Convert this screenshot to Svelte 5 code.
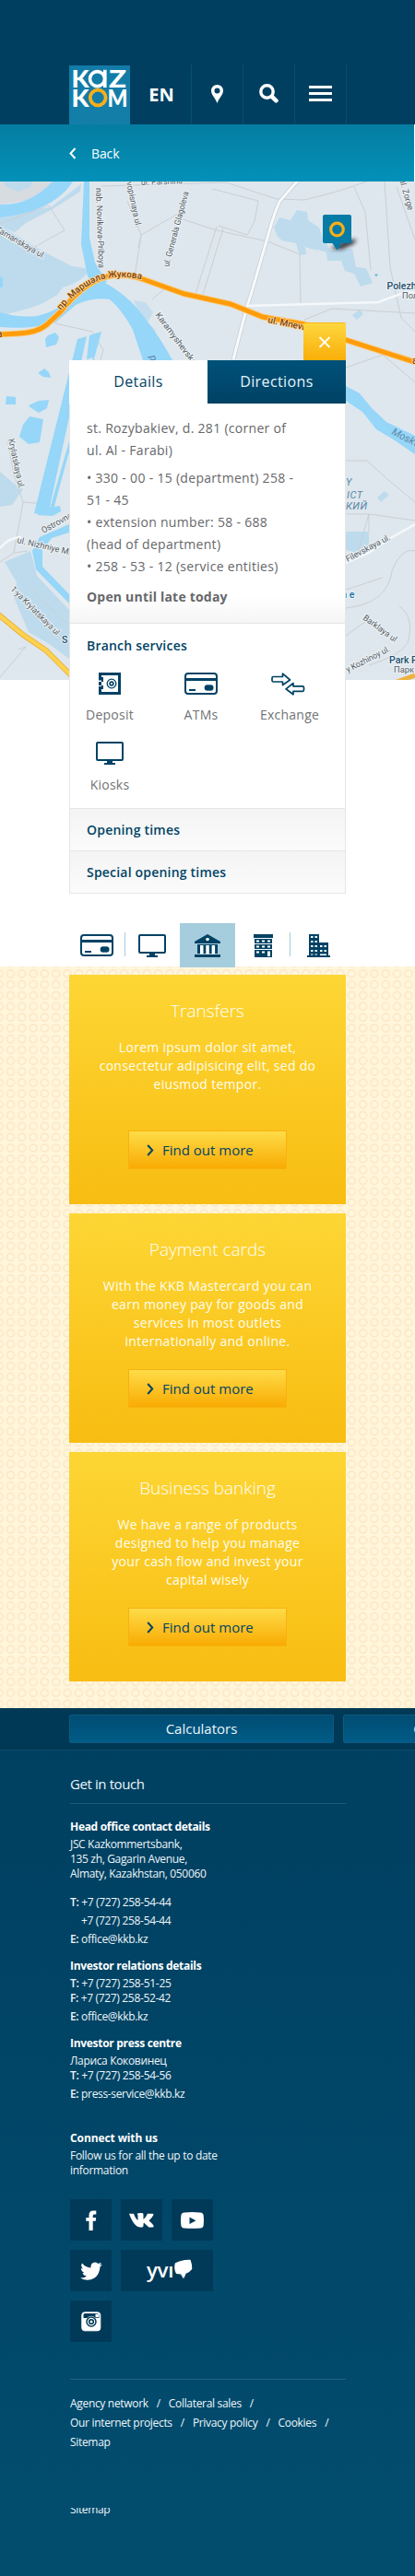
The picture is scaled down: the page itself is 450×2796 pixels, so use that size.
<script>
  const address = ['st. Rozybakiev, d. 281 (corner of', 'ul. Al - Farabi)'];
  const phones = [
    '• 330 - 00 - 15 (department) 258 -',
    '51 - 45',
    '• extension number: 58 - 688',
    '(head of department)',
    '• 258 - 53 - 12 (service entities)'
  ];
  const promos = [
    { title: 'Transfers', lines: ['Lorem ipsum dolor sit amet,', 'consectetur adipisicing elit, sed do', 'eiusmod tempor.'] },
    { title: 'Payment cards', lines: ['With the KKB Mastercard you can', 'earn money pay for goods and', 'services in most outlets', 'internationally and online.'] },
    { title: 'Business banking', lines: ['We have a range of products', 'designed to help you manage', 'your cash flow and invest your', 'capital wisely'] }
  ];
  const labels = [
    { t: 'nab. Novikova-Priboya', x: 104, y: 204, a: 88, l: 87 },
    { t: 'vopisnaya ul.', x: 137, y: 198, a: 78, l: 50 },
    { t: 'ul. Parshina', x: 153, y: 201, a: -2, l: 45 },
    { t: 'ul. Generala Glagoleva', x: 183, y: 290, a: -75, l: 84 },
    { t: 'Tamanskaya ul.', x: -5, y: 251, a: 30, l: 60 },
    { t: 'ul. Zorge', x: 433, y: 195, a: 74, l: 35 },
    { t: 'Karamyshevskaya', x: 168, y: 342, a: 53, l: 78 },
    { t: 'Krylatskaya ul.', x: 9, y: 477, a: 78, l: 55 },
    { t: 'Ostrovnaya', x: 47, y: 579, a: -29, l: 46 },
    { t: 'ul. Nizhniye Mnevniki', x: 18, y: 589, a: 13, l: 86 },
    { t: '1-ya Krylatskaya ul.', x: 11, y: 640, a: 45, l: 73 },
    { t: 'Filevskaya ul.', x: 377, y: 610, a: -28, l: 53 },
    { t: 'Barklaya ul', x: 393, y: 672, a: 36, l: 43 },
    { t: 'y Kozhinoy ul.', x: 377, y: 730, a: -27, l: 52 }
  ];
</script>

{#snippet cardIcon()}
  <svg width="36" height="24" viewBox="0 0 36 24">
    <rect x="1" y="1" width="34" height="22" rx="3" fill="#fff" stroke="#004264" stroke-width="2" />
    <path d="M1 6h34v3H1zM5 18h7v2H5z" fill="#004264" />
    <circle cx="25" cy="16.5" r="3.3" fill="#004264" /><circle cx="28.2" cy="16.5" r="3.3" fill="#004264" />
  </svg>
{/snippet}

{#snippet monitorIcon()}
  <svg width="30" height="25" viewBox="0 0 30 25">
    <rect x="1" y="1" width="28" height="19" rx="1" fill="#fff" stroke="#004264" stroke-width="2" />
    <path d="M12 20h6v3h3v2H9v-2h3z" fill="#004264" />
  </svg>
{/snippet}

<div class="page">
  <header>
    <div class="logo">
      <svg width="66" height="64" viewBox="0 0 66 64">
        <g font-family="Lato" font-weight="900" font-size="27" fill="#fff">
          <text x="2.5" y="24" textLength="19" lengthAdjust="spacingAndGlyphs">K</text>
          <text x="43" y="24" textLength="19" lengthAdjust="spacingAndGlyphs">Z</text>
          <text x="2.5" y="44.6" textLength="19" lengthAdjust="spacingAndGlyphs">K</text>
          <text x="41.5" y="44.6" textLength="22" lengthAdjust="spacingAndGlyphs">M</text>
        </g>
        <circle cx="30.5" cy="14.6" r="8" fill="none" stroke="#fff" stroke-width="3.6" />
        <rect x="37" y="4.8" width="3.6" height="19.2" fill="#fff" />
        <circle cx="31.2" cy="35" r="8.4" fill="none" stroke="#fcae17" stroke-width="3.8" />
      </svg>
    </div>
    <nav>
      <span class="lang">EN</span>
      <span><svg width="13" height="20" viewBox="0 0 13 20"><path fill="#fff" fill-rule="evenodd" d="M6.5 0A6.4 6.4 0 0 1 13 6.4C13 10.5 9 13.5 6.5 20 4 13.5 0 10.5 0 6.4A6.4 6.4 0 0 1 6.5 0zM6.5 3.5a3 3 0 1 0 0 6 3 3 0 0 0 0-6z" /></svg></span>
      <span><svg width="21" height="21" viewBox="0 0 21 21" fill="none" stroke="#fff"><circle cx="8.5" cy="8.5" r="6.7" stroke-width="3.4" /><path d="M14 14l4.500 4.300" stroke-width="4.5" stroke-linecap="round" /></svg></span>
      <span><svg width="25" height="17" viewBox="0 0 25 17"><path d="M0 0h25v3H0zM0 7h25v3H0zM0 14h25v3H0z" fill="#fff" /></svg></span>
    </nav>
  </header>

  <div class="back">
    <svg width="8" height="13" viewBox="0 0 8 13"><path d="M6.500 1L1.500 6.500l5 5.500" fill="none" stroke="#fff" stroke-width="2" /></svg>
    <span>Back</span>
  </div>

  <section class="locator">
    <svg class="map" width="450" height="541" viewBox="0 197 450 541">
      <defs>
        <path id="zhukova" d="M66 337Q95 302 124 301Q140 300 158 304" />
        <filter id="soft" x="-30%" y="-80%" width="160%" height="260%"><feGaussianBlur stdDeviation="2.2" /></filter>
      </defs>
      <rect y="197" width="450" height="541" fill="#dee7ed" />
      <path d="M0 197H70L40 216 0 222z" fill="#d7dce1" />
      <g fill="#bddbed">
        <path d="M4 197H36L33 203 20 208 6 202zM55 225L88 200 87 208 55 228 28 242 16 252 0 246V234z" />
        <path d="M0 245L45 272 78 289 100 292 88 303 77 309 68 312 62 320 45 330 30 335 0 343z" />
        <path d="M297 247L303 236 315 239 322 228 333 230 334 239 346 247 351 262 341 267 344 272 331 268 332 276 325 277 321 264 306 261 301 257z" />
        <path d="M341 262L352 260 358 272 382 270 386 290 397 291 401 300 404 307 391 311 384 297 374 294 370 283 355 283 354 274 342 270z" />
        <path d="M145 326L158 328 166 339 160 350 170 360 158 358z" opacity=".8" />
        <path d="M382 342l8-6 4 5-7 6zM409 540l8-7 5 4-9 8zM375 577h25v15h-6l-1 10-18-5z" />
        <path d="M0 512l14 12 11 7-12 17-13 2zM5 610L33 598 40 625 75 662V715L55 700 31 686 22 665 15 648 18 632z" />
      </g>
      <g fill="none" stroke="#c9cfd5" stroke-width="1">
        <path d="M0 243L53 223 70 250 25 275M110 202L245 198 300 216 330 217 365 208 398 197M138 218L153 255 198 229M153 255L146 300M153 255L150 269M195 237L235 250 290 262 325 276 326 330M230 205L280 218 276 240 268 255 237 245M235 246L210 325M242 248L220 320M384 203L396 230 402 293M417 197L423 290 435 345 450 360M430 203L450 260M255 330L180 312 165 325M60 351L100 360 112 380 75 510M330 347L360 335 450 340M375 399L415 385 450 415M375 500L398 500 420 520 450 545M375 558H400V577M388 600L400 558 450 565M375 660Q420 655 425 620 435 594 450 598M375 640L415 627M433 658Q450 670 442 698 435 711 400 722M375 690L400 672 420 690M8 477L15 515 25 545 15 600M25 545L60 548M0 610L15 600 30 598M75 680L35 640M20 705L28 702 0 735" />
      </g>
      <path d="M323 196Q307 214 303 219 297 232 290 258L272 320 268 332 253 390" fill="none" stroke="#c6ced5" stroke-width="4.5" />
      <path d="M323 196Q307 214 303 219 297 232 290 258L272 320 268 332 253 390" fill="none" stroke="#f7fafb" stroke-width="3" />
      <path d="M268 332L410 328 440 317 450 318M0 595Q10 583 23 583M375 611L400 600 422 585 450 569" fill="none" stroke="#f5f8fa" stroke-width="2.5" />
      <g fill="#95d6f9">
        <path d="M57 197H79C70 211 55 222 35 229Q18 234 0 236V222Q33 223 57 197z" />
        <path d="M91 197L88 265 95 300 104 312 116 306 103 285 97 258V197z" />
        <path d="M106 307Q86 317 72 329 57 339 40 343 20 345 0 339V355Q35 358 60 350L82 331Q100 322 119 325 133 337 144 358L155 391H187Q173 365 156 344 140 321 112 306z" />
        <path d="M84 368L94 365 52 559 37 557zM97 364L110 360 58 553 53 556 101 388 94 390zM48 552L65 549 66 555 57 560 40 559z" />
        <path d="M52 364L60 361 64 366 61 374 50 377 49 368zM48 400l5 4 2 6-8-1-6-4zM31 440L42 435 53 434 51 443 42 448 34 443zM32 452L47 455 43 480 31 482 21 474 25 461zM7 430l10 1v8H6z" />
        <path d="M75 569L75 578 56 584 46 597V615L75 645V655L39 618 35 598 43 583z" />
        <path d="M375 419L390 427 403 443 419 458 450 473V493L425 476 408 466 393 447 375 435z" />
      </g>
      <path d="M0 300l3 2v10H0z" fill="#95d6f9" />
      <circle cx="408" cy="298.5" r="1.5" fill="#78bede" />
      <path d="M0 363L20 362Q40 361 50 353L66 338Q95 301 124 299 140 298 155 303L200 319 250 330 285 344 330 352 375 369 450 393" fill="none" stroke="#f5cf8f" stroke-width="7" />
      <path d="M0 363L20 362Q40 361 50 353L66 338Q95 301 124 299 140 298 155 303L200 319 250 330 285 344 330 352 375 369 450 393" fill="none" stroke="#ff9c0a" stroke-width="5" />
      <path d="M-3 666L25 689 50 706 78 734" fill="none" stroke="#edb23e" stroke-width="6" />
      <path d="M-3 666L25 689 50 706 78 734" fill="none" stroke="#ffd34f" stroke-width="4" />
      <path d="M425 742L450 733" stroke="#edb23e" stroke-width="5" />
      <g font-family="Roboto" font-size="9.3" fill="#545d65" stroke="#edf2f5" stroke-width="2" paint-order="stroke">
        {#each labels as l}
          <text transform="translate({l.x} {l.y}) rotate({l.a})" textLength={l.l} lengthAdjust="spacingAndGlyphs">{l.t}</text>
        {/each}
        <text x="436" y="324">Поле</text>
        <text x="427" y="730">Парк</text>
      </g>
      <g font-family="Roboto" font-weight="500" font-size="10" fill="#7c4006" stroke="#ffd9a0" stroke-width="1.5" paint-order="stroke">
        <text><textPath href="#zhukova">пр. Маршала Жукова</textPath></text>
        <text transform="translate(290 350) rotate(12)">ul. Mnevniki</text>
        <text x="-3" y="366">a</text>
        <text x="447" y="395">a</text>
      </g>
      <g font-family="Roboto" font-weight="500" font-size="10.5" fill="#24506f" stroke="#edf2f5" stroke-width="2" paint-order="stroke">
        <text x="419.5" y="314">Polezh</text>
        <text x="422" y="720">Park P</text>
        <text x="67" y="698">S</text>
        <text x="367" y="649" fill="#1474a4">m e</text>
      </g>
      <g font-family="Roboto" font-style="italic" font-size="11" fill="#5c87a6">
        <text x="375" y="527">Y</text>
        <text x="376" y="541" letter-spacing=".5">ICT</text>
        <text x="375" y="553" letter-spacing=".5">КИЙ</text>
        <text transform="translate(424 471) rotate(27)">Moskva</text>
        <text transform="translate(162 387) rotate(70)">p</text>
      </g>
      <path d="M358 270L376 260 387 260 383 265 370 271z" fill="#1a1f26" opacity=".85" filter="url(#soft)" />
      <path d="M352 233h27q2 0 2 2v27q0 2-2 2h-8.500l-5 7.500-5-7.500H352q-2 0-2-2v-27q0-2 2-2z" fill="#057ba6" />
      <circle cx="365.5" cy="249" r="6.8" fill="none" stroke="#fcae17" stroke-width="3.2" />
    </svg>

    <div class="panel">
      <button class="close" aria-label="Close"><svg width="14" height="13" viewBox="0 0 14 13"><path d="M1.500 1l11 11M12.500 1l-11 11" stroke="#fff" stroke-width="1.8" /></svg></button>
      <div class="tabs"><span>Details</span><span class="dark">Directions</span></div>
      <div class="info">
        <div class="lines">{#each address as line}<div>{line}</div>{/each}</div>
        <div class="lines phones">{#each phones as line}<div>{line}</div>{/each}</div>
        <strong>Open until late today</strong>
      </div>
      <div class="services">
        <h3>Branch services</h3>
        <div class="grid">
          <div>
            <svg width="36" height="24" viewBox="0 0 36 24">
              <rect x="7.5" y="1.5" width="21" height="21" fill="#fff" stroke="#004264" stroke-width="3" />
              <path d="M6 5h5v5H6zM6 14h5v4H6z" fill="#004264" /><path d="M6 8.500h3v1.500H6zM6 14h3v1H6z" fill="#fff" />
              <circle cx="20" cy="12" r="4.8" fill="none" stroke="#004264" stroke-width="1.3" />
              <circle cx="20" cy="12" r="1.9" fill="none" stroke="#004264" stroke-width="1.6" />
            </svg>
            <span>Deposit</span>
          </div>
          <div>{@render cardIcon()}<span>ATMs</span></div>
          <div>
            <svg class="swap" width="37" height="25" viewBox="0 0 37 25" fill="#fff" stroke="#004264" stroke-width="1.7" stroke-linejoin="round">
              <path d="M2.500 4.500h10V1.200l8 6.800-8 5.500V10H2.500q-1.500 0-1.500-1.500V6q0-1.500 1.500-1.500z" />
              <path d="M34 14.800H24V11.500L16 17.800l8 6v-3.500h10q1.500 0 1.500-1.500v-2.500q0-1.500-1.500-1.500z" />
            </svg>
            <span>Exchange</span>
          </div>
          <div>{@render monitorIcon()}<span>Kiosks</span></div>
        </div>
      </div>
      <h3 class="fold">Opening times</h3>
      <h3 class="fold">Special opening times</h3>
    </div>

    <div class="types">
      <span>{@render cardIcon()}</span>
      <span class="sepL">{@render monitorIcon()}</span>
      <span class="active">
        <svg width="28" height="25" viewBox="0 0 28 25">
          <path d="M14 0L28 8v2H0V8zM3 11h22v10H3zM0 22h28v3H0z" fill="#004264" />
          <circle cx="14" cy="5.5" r="1.8" fill="#fff" /><path d="M6 12h3.500v9.500H6zM12.300 12h3.500v9.500h-3.500zM18.600 12h3.500v9.500h-3.500z" fill="#fff" />
        </svg>
      </span>
      <span class="sepR">
        <svg width="21" height="25" viewBox="0 0 21 25">
          <path d="M0 0h21v4H0zM1 5h19v5H1zM1 11h19v5H1zM1 17h19v8H1z" fill="#004264" />
          <path d="M3 6.500h3v2H3zM9 6.500h3v2H9zM15 6.500h3v2h-3zM3 12.500h3v2H3zM9 12.500h3v2H9zM15 12.500h3v2h-3zM3 18.500h3v2H3zM9 18.500h3v2H9zM15 18.500h3v5.500h-3z" fill="#fff" />
        </svg>
      </span>
      <span>
        <svg width="25" height="25" viewBox="0 0 25 25">
          <path d="M2 0h11v9h10v14h2v2H0v-2h2z" fill="#004264" />
          <path d="M4 2h2.500v2H4zM8.500 2H11v2H8.500zM4 7h2.500v2H4zM8.500 7H11v2H8.500zM4 12h2.500v2H4zM8.500 12H11v2H8.500zM14 12h2.500v2H14zM18.500 12H21v2h-2.500zM4 17h2.500v2H4zM8.500 17H11v2H8.500zM14 17h2.500v2H14zM18.500 17H21v2h-2.500zM14 21.500h7v1.500h-7zM4 21.500h2.500v1H4zM8.500 21.500H11v1H8.500z" fill="#fff" />
        </svg>
      </span>
    </div>
  </section>

  <section class="promos">
    {#each promos as p}
      <article>
        <h2>{p.title}</h2>
        <div class="copy">{#each p.lines as line}<div>{line}</div>{/each}</div>
        <button class="more"><svg width="8" height="13" viewBox="0 0 8 13"><path d="M1.200 1l5 5.500-5 5.500" fill="none" stroke="#014465" stroke-width="2" /></svg><span>Find out more</span></button>
      </article>
    {/each}
  </section>

  <footer>
    <div class="tools"><span>Calculators</span><span>Currency converter</span></div>
    <div class="body">
      <h4>Get in touch</h4>
      <h5>Head office contact details</h5>
      <p>JSC Kazkommertsbank,</p>
      <p>135 zh, Gagarin Avenue,</p>
      <p>Almaty, Kazakhstan, 050060</p>
      <p class="tall first"><b>T:</b> +7 (727) 258-54-44</p>
      <p class="tall indent">+7 (727) 258-54-44</p>
      <p class="tall"><b>E:</b> office@kkb.kz</p>
      <h5 class="group">Investor relations details</h5>
      <p><b>T:</b> +7 (727) 258-51-25</p>
      <p><b>F:</b> +7 (727) 258-52-42</p>
      <p class="tall mail"><b>E:</b> office@kkb.kz</p>
      <h5 class="group">Investor press centre</h5>
      <p>Лариса Коковинец</p>
      <p><b>T:</b> +7 (727) 258-54-56</p>
      <p class="tall mail"><b>E:</b> press-service@kkb.kz</p>
      <h5 class="connect">Connect with us</h5>
      <p class="loose">Follow us for all the up to date</p>
      <p class="loose">information</p>
      <div class="social">
        <span><svg width="12" height="22" viewBox="0 0 12 22"><path d="M3.500 22V11.800H.3V8H3.500V5.500Q3.500.5 8 .5h3.300v4H9Q7.700 4.500 7.700 6v2h3.500l-.5 3.800h-3V22z" fill="#fff" /></svg></span>
        <span><svg width="27" height="16" viewBox="0 0 27 16"><path d="M0 .7h5Q6.800 6 9.500 8V3Q9.500 1.500 8.500 1 9.500 0 12 0h2.200Q15.500.2 15.500 2v5Q18 5 20 .7h5.500q1.500 0 .8 1.500-1.300 3-4.800 6 5.500 5 5.200 6.300-.2 1-1.500 1H21.500Q19 13.500 16 10.500q-.6.5-.5 3 0 2-1.500 2h-1Q5.500 16 0 .7z" fill="#fff" /></svg></span>
        <span><svg width="25" height="18" viewBox="0 0 25 18"><path fill-rule="evenodd" d="M4 .5Q12 -.4 21 .5 24.500.8 24.700 4q.5 5 0 10-.2 3.200-3.700 3.500-9 .7-17 0Q.5 17.200.3 14q-.5-5 0-10Q.5.8 4 .5zM9.500 5.500v7.500l7-3.700z" fill="#fff" /></svg></span>
        <span><svg width="24" height="20" viewBox="0 0 24 20"><path d="M2 1.500q3.700 4.500 9.500 5Q11 1 16 .5q2.300 0 3.500 1.500L23 .7 21.200 3.500l2.800-.7-2.500 2.700Q21 14 15 17.800 8 22 0 17.500q4.500.2 7-2-3.500-.5-4.500-3.500h2Q.8 10.500 1 7l2 .5Q0 4.700 2 1.500z" fill="#fff" /></svg></span>
        <span class="wide"><svg width="52" height="26" viewBox="0 0 52 26"><text x="1" y="19.5" font-family="Open Sans" font-weight="600" font-size="22" fill="#fff" textLength="29" lengthAdjust="spacingAndGlyphs">yvı</text><path d="M32.500 5Q40 1 48 1.500q1.500 4 1.500 9-2.500 3.500-6.500 4.700l-2 4.800-2.500-4.300-5-.5Q31 10 32.500 5z" fill="#fff" stroke="#fff" stroke-width="1.5" stroke-linejoin="round" /></svg></span>
        <span class="cam"><svg width="22" height="22" viewBox="0 0 22 22"><rect x=".8" y=".8" width="20" height="20" rx="3" fill="#fff" stroke="#fff" stroke-width="1" /><path d="M2.500 7V3.500q0-1.500 1.500-1.500h13q2.500 0 2.500 2v3h-4Q11 2.500 6.500 7z" fill="#013a58" /><rect x="15.5" y="2.7" width="3.5" height="3.5" fill="#fff" /><circle cx="11" cy="11" r="5" fill="#fff" stroke="#013a58" stroke-width="1.5" /><circle cx="11" cy="11" r="2.3" fill="none" stroke="#013a58" stroke-width="1.6" /></svg></span>
      </div>
      <div class="links">
        <div>Agency network<i>/</i>Collateral sales<i>/</i></div>
        <div>Our internet projects<i>/</i>Privacy policy<i>/</i>Cookies<i>/</i></div>
        <div>Sitemap</div>
      </div>
      <div class="cut"><p>Sitemap</p></div>
    </div>
  </footer>
</div>

<style>
  :global(body) { background: #fff; }
  .page { width: 450px; height: 2796px; overflow: hidden; font-family: 'Open Sans', sans-serif; display: flex; flex-direction: column; }
  .page * { box-sizing: border-box; }
  svg { display: block; flex: none; }
  h2, h3, h4, h5, p { margin: 0; }
  button { border: 0; padding: 0; font: inherit; }

  header { height: 135px; flex: none; background: #003f60; padding: 70px 75px 0; display: flex; }
  .logo { width: 66px; height: 64px; margin-top: 1px; background: linear-gradient(#127ba7, #137fa9); flex: none; }
  nav { display: flex; color: #fff; }
  nav span { width: 56px; padding-bottom: 2px; display: flex; align-items: center; justify-content: center; border-right: 1px solid #07506f; }
  nav .lang { width: 67px; font-size: 20px; font-weight: 700; padding: 0 0 0 2px; }

  .back { height: 62px; flex: none; background: linear-gradient(#057da1, #0391b9); border-right: 1px solid #fff; padding-left: 75px; display: flex; align-items: center; gap: 16px; color: #fff; font-size: 14px; letter-spacing: -.1px; }
  .back svg { margin-top: 1px; }

  .locator { position: relative; height: 852px; flex: none; padding: 153px 75px 0; }
  .map { position: absolute; left: 0; top: 0; z-index: 0; }
  .panel { position: relative; width: 300px; display: flex; flex-direction: column; }
  .close { align-self: flex-end; width: 46px; height: 41px; background: linear-gradient(#fed73f, #f9ae08); border-top: 1px solid #fdb813; border-radius: 2px 2px 0 0; display: flex; align-items: center; justify-content: center; }
  .tabs { display: flex; height: 47px; }
  .tabs span { flex: 1; background: #fff; color: #014465; font-size: 16px; letter-spacing: .4px; line-height: 46px; text-align: center; }
  .tabs .dark { background: linear-gradient(#00517a, #004264); color: #e6f3f9; }
  .info { height: 239px; padding: 15px 18px 0; color: #66676a; font-size: 14px; letter-spacing: .3px; background: linear-gradient(#fff 88%, #f5f5f5); border: solid #e6e6e6; border-width: 0 1px 1px; white-space: nowrap; }
  .lines { line-height: 24px; }
  .phones { margin-top: 6px; }
  .info strong { display: block; line-height: 24px; margin-top: 9px; letter-spacing: .2px; }
  h3 { font-size: 14px; font-weight: 600; color: #014465; letter-spacing: .2px; }
  .services { height: 200px; background: #fff; border: solid #e6e6e6; border-width: 0 1px; padding-top: 12px; }
  .services h3 { padding-left: 18px; line-height: 24px; }
  .grid { display: grid; grid-template-columns: 86px 112px 80px; margin-top: 17px; }
  .grid div { height: 75px; display: flex; flex-direction: column; align-items: center; color: #717375; font-size: 14px; letter-spacing: .25px; }
  .grid span { margin-top: 11px; line-height: 22px; }
  .grid .swap { margin: 0 3px -1px 0; }
  .fold { height: 46px; line-height: 46px; padding-left: 18px; background: linear-gradient(#f4f4f4, #fbfbfb); border: solid #e6e6e6; border-width: 1px 1px 0; }
  .fold:last-child { height: 47px; border-bottom-width: 1px; }
  .types { position: relative; z-index: 1; display: flex; height: 48px; margin-top: 32px; }
  .types span { position: relative; width: 60px; display: flex; align-items: center; justify-content: center; }
  .types .active { background: #a6cddd; }
  .sepL::before, .sepR::after { content: ''; position: absolute; top: 10px; width: 1px; height: 26px; background: #a6cddd; }
  .sepL::before { left: 0; }
  .sepR::after { right: 0; }

  .promos { height: 805px; flex: none; padding: 9px 75px 0; display: flex; flex-direction: column; gap: 10px; background: radial-gradient(circle, transparent 2.8px, #fce9c8 3.4px, #fce9c8 4.6px, transparent 5.2px) 5.25px 1.9px / 12.34px 11.83px #fff6dc; }
  article { height: 249px; background: linear-gradient(#fdd634, #f8bd12); display: flex; flex-direction: column; align-items: center; color: #fffdf0; }
  h2 { font-size: 19px; font-weight: 350; line-height: 28px; margin-top: 25px; letter-spacing: 0; color: #fff; }
  .copy { height: 80px; margin-top: 16px; font-size: 14px; letter-spacing: .3px; line-height: 20px; text-align: center; white-space: nowrap; }
  .more { width: 172px; height: 42px; margin-top: 20px; padding-left: 19px; border: 1px solid #f8b10f; background: linear-gradient(#fedc48, #f9ab03); display: flex; align-items: center; gap: 9px; font-size: 15px; color: #014465; }

  footer { height: 942px; flex: none; background: linear-gradient(#003f60, #024c6e 90%); color: #eef6fa; }
  .tools { height: 46px; background: #003955; border-bottom: 1px solid #0d4c6a; padding: 7px 0 0 75px; display: flex; gap: 10px; overflow: hidden; }
  .tools span { flex: none; width: 287px; height: 31px; border: 1px solid #0f5a80; border-radius: 2px; background: linear-gradient(#004c73, #005c87); font-size: 15px; line-height: 28px; text-align: center; }
  .body { padding: 0 75px 0 76px; font-size: 12px; letter-spacing: -.34px; white-space: nowrap; }
  h4 { height: 58px; padding-top: 20px; line-height: 32px; font-size: 15px; font-weight: 400; letter-spacing: -.4px; border-bottom: 1px solid #1a5b79; }
  h5 { font-size: 12px; font-weight: 700; line-height: 16px; margin: 17px 0 3px; letter-spacing: -.3px; color: #fff; }
  p { line-height: 16px; }
  b { font-weight: 600; }
  .tall { line-height: 20px; }
  .first { margin-top: 13px; }
  .indent { padding-left: 12px; }
  .mail { margin-top: 2px; }
  .group { margin-top: 11px; }
  .connect { margin-top: 30px; letter-spacing: -.1px; }
  .loose { letter-spacing: -.3px; }
  .social { display: grid; grid-template-columns: 45px 45px 45px; gap: 10px; grid-auto-rows: 45px; margin-top: 23px; }
  .social span { background: #013a58; display: flex; align-items: center; justify-content: center; }
  .social .wide { grid-column: span 2; padding-left: 5px; }
  .social .cam { grid-column: 1; }
  .links { margin-top: 40px; border-top: 1px solid #1f6482; padding-top: 15px; line-height: 21px; letter-spacing: -.32px; }
  .links i { font-style: normal; margin: 0 9px; }
  .cut { margin-top: 61px; height: 14px; overflow: hidden; }
  .cut p { margin-top: -6px; }
</style>
